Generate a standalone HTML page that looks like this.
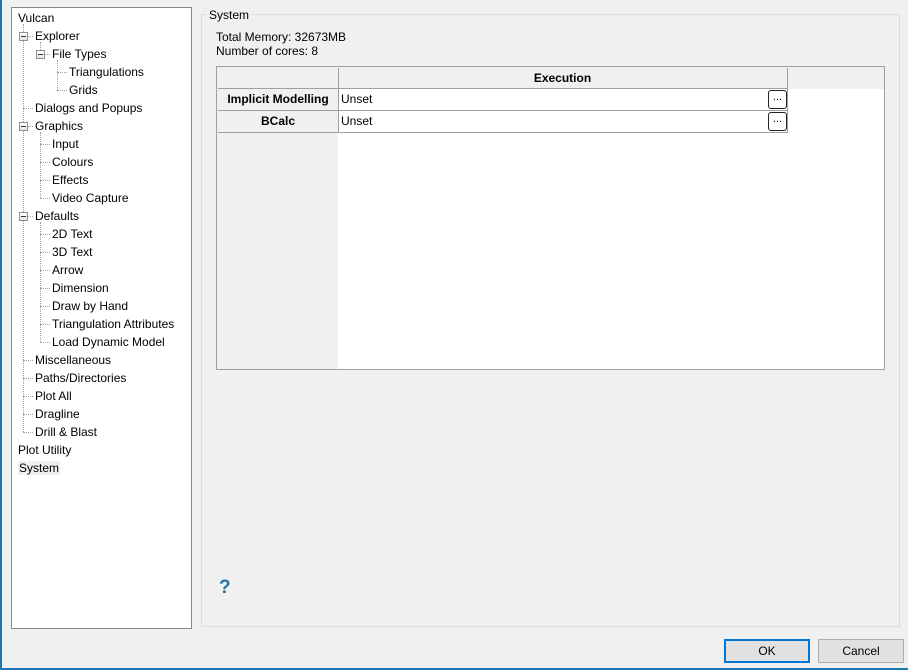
<!DOCTYPE html><html><head><style>
*{margin:0;padding:0;box-sizing:border-box}
body{width:908px;height:670px;background:#f0f0f0;font-family:"Liberation Sans",sans-serif;font-size:12px;color:#000;position:relative;overflow:hidden}
.a{position:absolute;white-space:nowrap}
.t{position:absolute;line-height:14px;white-space:nowrap}
.v{position:absolute;border-left:1px dotted #a0a0a0;width:0}
.h{position:absolute;border-top:1px dotted #a0a0a0;height:0}
.bx{position:absolute;width:9px;height:9px;border:1px solid #919191;background:linear-gradient(#fff,#e6e6e6)}
.bx:after{content:"";position:absolute;left:1px;top:3px;width:5px;height:1px;background:#333}
.btn{position:absolute;background:#e1e1e1;border:1px solid #adadad;text-align:center;line-height:21px}
</style></head><body>
<div class="a" style="left:0;top:0;width:2px;height:670px;background:#1c79b4"></div>
<div class="a" style="left:0;top:668px;width:908px;height:2px;background:#1c79b4"></div>
<div class="a" style="left:11px;top:7px;width:181px;height:622px;background:#fff;border:1px solid #828790"></div>
<div class="v" style="left:23px;top:24px;height:408px"></div>
<div class="v" style="left:40px;top:42px;height:12px"></div>
<div class="v" style="left:57px;top:60px;height:30px"></div>
<div class="v" style="left:40px;top:132px;height:66px"></div>
<div class="v" style="left:40px;top:222px;height:120px"></div>
<div id="tree"></div>
<div class="a" style="left:201px;top:14px;width:699px;height:613px;border:1px solid #dcdcdc"></div>
<div class="a" style="left:206px;top:8px;padding:0 3px;background:#f0f0f0">System</div>
<div class="a" style="left:216px;top:30px">Total Memory: 32673MB</div>
<div class="a" style="left:216px;top:44px">Number of cores: 8</div>
<div class="a" style="left:216px;top:66px;width:669px;height:304px;border:1px solid #a0a0a0;background:#fff">
 <div class="a" style="left:0;top:0;width:667px;height:22px;background:#f0f0f0"></div>
 <div class="a" style="left:0;top:0;width:121px;height:302px;background:#f0f0f0"></div>
 <div class="a" style="left:1px;top:1px;width:121px;height:21px;border:1px solid #a0a0a0;border-left:none;border-top:none"></div>
 <div class="a" style="left:121px;top:1px;width:450px;height:21px;border-bottom:1px solid #a0a0a0;border-right:1px solid #a0a0a0;text-align:center;font-weight:bold;line-height:20px">Execution</div>
 <div class="a" style="left:1px;top:22px;width:121px;height:22px;border-bottom:1px solid #a0a0a0;border-right:1px solid #a0a0a0;text-align:center;font-weight:bold;line-height:21px">Implicit Modelling</div>
 <div class="a" style="left:1px;top:44px;width:121px;height:22px;border-bottom:1px solid #a0a0a0;border-right:1px solid #a0a0a0;text-align:center;font-weight:bold;line-height:21px">BCalc</div>
 <div class="a" style="left:122px;top:22px;width:449px;height:22px;border-bottom:1px solid #a0a0a0;border-right:1px solid #a0a0a0;line-height:21px;padding-left:2px">Unset</div>
 <div class="a" style="left:122px;top:44px;width:449px;height:22px;border-bottom:1px solid #a0a0a0;border-right:1px solid #a0a0a0;line-height:21px;padding-left:2px">Unset</div>
 <div class="a" style="left:551px;top:23px;width:19px;height:19px;border:1px solid #222;border-radius:3px;background:#fff;text-align:center;line-height:13px;font-size:11px">...</div>
 <div class="a" style="left:551px;top:45px;width:19px;height:19px;border:1px solid #222;border-radius:3px;background:#fff;text-align:center;line-height:13px;font-size:11px">...</div>
</div>
<div class="a" style="left:219px;top:577px;font-size:19px;font-weight:bold;color:#1e73a8">?</div>
<div class="btn" style="left:724px;top:639px;width:86px;height:24px;border:2px solid #0078d7;line-height:20px">OK</div>
<div class="btn" style="left:818px;top:639px;width:86px;height:24px;line-height:22px">Cancel</div>
<script>
var it=[[0,"Vulcan"],[1,"Explorer",1],[2,"File Types",1],[3,"Triangulations"],[3,"Grids"],[1,"Dialogs and Popups"],[1,"Graphics",1],[2,"Input"],[2,"Colours"],[2,"Effects"],[2,"Video Capture"],[1,"Defaults",1],[2,"2D Text"],[2,"3D Text"],[2,"Arrow"],[2,"Dimension"],[2,"Draw by Hand"],[2,"Triangulation Attributes"],[2,"Load Dynamic Model"],[1,"Miscellaneous"],[1,"Paths/Directories"],[1,"Plot All"],[1,"Dragline"],[1,"Drill & Blast"],[0,"Plot Utility"],[0,"System"]];
var h="";
it.forEach(function(e,i){var y=18+18*i,l=e[0],x=l?18+17*l:18;
if(l){var lx=6+17*l;h+='<div class="h" style="left:'+lx+'px;top:'+y+'px;width:'+(x-lx-2)+'px"></div>';
if(e[2])h+='<div class="bx" style="left:'+(lx-4)+'px;top:'+(y-4)+'px"></div>';}
var bg=(e[1]=="System")?"background:#f0f0f0;padding:0 1px;":"";
h+='<div class="t" style="'+bg+'left:'+x+'px;top:'+(y-7)+'px">'+e[1].replace("&","&amp;")+'</div>';});
document.getElementById("tree").innerHTML=h;
</script>
</body></html>
